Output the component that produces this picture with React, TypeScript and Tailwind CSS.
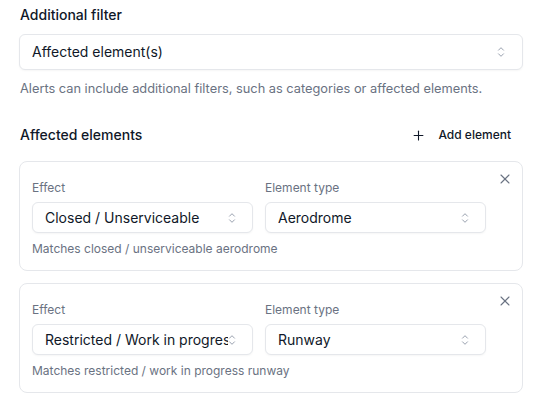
import { Plus, X } from "lucide-react";

type Element = {
  effect: string;
  type: string;
};

const elements: Element[] = [
  { effect: "Closed / Unserviceable", type: "Aerodrome" },
  { effect: "Restricted / Work in progress", type: "Runway" },
];

const UpDown = () => (
  <svg width="8" height="12" viewBox="0 0 8 12" fill="none" className="shrink-0 text-gray-400">
    <path d="M1.5 4.2 4 1.7l2.5 2.5M1.5 7.8 4 10.3l2.5-2.5" stroke="currentColor" strokeWidth="1" strokeLinecap="round" strokeLinejoin="round" />
  </svg>
);

const Select = ({ value, big }: { value: string; big?: boolean }) => (
  <div
    className={`flex items-center w-full bg-white border border-gray-200 rounded-md shadow-[0_1px_2px_rgba(0,0,0,0.04)] text-sm text-gray-900 ${
      big ? "h-9 pl-3 pr-[17px]" : "h-[31px] pl-3 pr-[16px]"
    }`}
  >
    <span className="flex-1 overflow-hidden whitespace-nowrap">{value}</span>
    <UpDown />
  </div>
);

export default function App() {
  return (
    <div className="w-[541px] h-[407px] bg-white pl-[19px] pr-[18px] pt-[5px] font-['Inter',sans-serif] text-gray-900 overflow-hidden">
      <div className="pl-px text-sm font-medium leading-5">Additional filter</div>
      <div className="mt-[9px]">
        <Select value="Affected element(s)" big />
      </div>
      <p className="mt-[9px] pl-px text-[12.8px] leading-5 text-gray-500">
        Alerts can include additional filters, such as categories or affected elements.
      </p>

      <div className="mt-[26px] pl-px flex items-center justify-between h-5">
        <div className="text-sm font-medium">Affected elements</div>
        <button className="flex items-center gap-3 pr-3 text-xs font-medium text-gray-900">
          <Plus size={15} strokeWidth={1.75} />
          Add element
        </button>
      </div>

      <div className="mt-4 flex flex-col gap-3">
        {elements.map((el) => (
          <div key={el.type} className="relative border border-gray-200 rounded-lg pl-3 pr-9 pt-[18px] pb-[13px]">
            <button className="absolute top-[9px] right-[9px] text-gray-500">
              <X size={16} strokeWidth={1.6} />
            </button>
            <div className="grid grid-cols-2 gap-3">
              <div className="flex flex-col gap-1.5">
                <span className="text-xs leading-4 text-gray-500">Effect</span>
                <Select value={el.effect} />
              </div>
              <div className="flex flex-col gap-1.5">
                <span className="text-xs leading-4 text-gray-500">Element type</span>
                <Select value={el.type} />
              </div>
            </div>
            <p className="mt-2 text-xs leading-4 text-gray-500">
              Matches {el.effect.toLowerCase()} {el.type.toLowerCase()}
            </p>
          </div>
        ))}
      </div>
    </div>
  );
}
